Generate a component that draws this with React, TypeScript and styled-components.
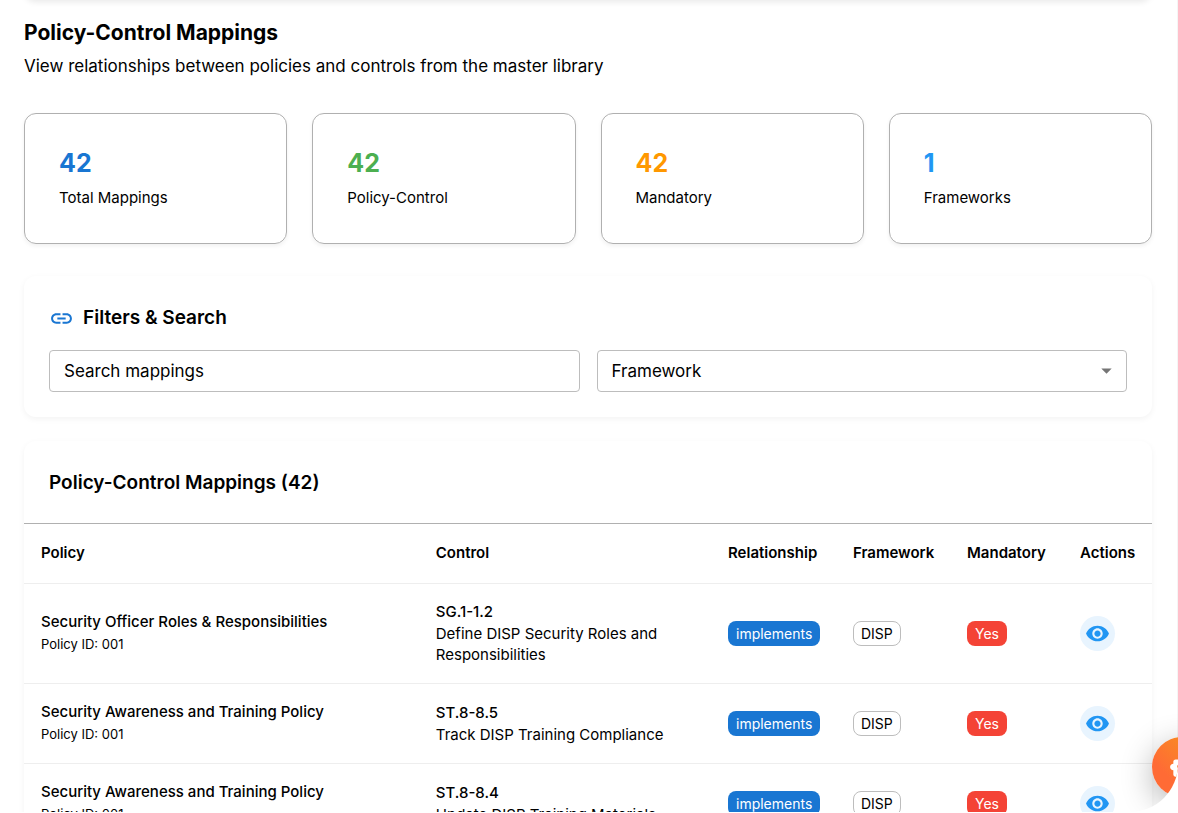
import React from "react";
import styled, { createGlobalStyle } from "styled-components";

const GlobalStyle = createGlobalStyle`
  * { box-sizing: border-box; }
  html, body { margin: 0; background: #fff; }
  body { font-family: Inter, "Liberation Sans", sans-serif; color: #000; }
  h1, h2, p { margin: 0; }
`;

const Viewport = styled.div`
  position: relative;
  height: calc(100vh - 1px);
  overflow: hidden;
  border-radius: 0 0 48px 0;
  background: #fff;
`;

const PanelAbove = styled.div`
  height: 24px;
  margin: -24px 0 0;
  border-radius: 12px;
  box-shadow: 0 2px 6px rgba(0, 0, 0, 0.09);
`;

const Page = styled.main`
  display: flex;
  flex-direction: column;
  padding: 0 25px 0 24px;
  border-right: 1px solid #f5f5f5;
`;

const Title = styled.h1`
  margin-top: 17px;
  font-size: 21px;
  line-height: 32px;
  font-weight: 700;
`;

const Subtitle = styled.p`
  margin-top: 5px;
  font-size: 17px;
  line-height: 24px;
`;

const StatGrid = styled.section`
  display: grid;
  grid-template-columns: repeat(4, 1fr);
  gap: 25px;
  margin-top: 35px;
`;

const StatCard = styled.div`
  height: 131px;
  padding: 33px 34px;
  border: 1px solid #b0b0b0;
  border-radius: 12px;
  box-shadow: 0 2px 4px rgba(0, 0, 0, 0.06);
`;

const StatValue = styled.p<{ $color: string }>`
  color: ${(p) => p.$color};
  font-size: 25px;
  line-height: 32px;
  font-weight: 700;
`;

const StatLabel = styled.p`
  margin-top: 8px;
  font-size: 15px;
  line-height: 21px;
`;

const Panel = styled.section`
  border-radius: 12px;
  box-shadow: 0 2px 6px rgba(0, 0, 0, 0.05);
`;

const FilterPanel = styled(Panel)`
  margin-top: 32px;
  padding: 26px 25px 25px;
`;

const FilterHeading = styled.h2`
  display: flex;
  align-items: center;
  gap: 9px;
  font-size: 19px;
  line-height: 32px;
  font-weight: 600;
`;

const FilterRow = styled.div`
  display: grid;
  grid-template-columns: 1fr 1fr;
  gap: 17px;
  margin-top: 16px;
`;

const SearchInput = styled.input`
  width: 100%;
  height: 42px;
  padding: 0 14px;
  border: 1px solid #bdbdbd;
  border-radius: 4px;
  background: #fff;
  font: inherit;
  font-size: 17px;
  color: #000;
  &::placeholder { color: #000; opacity: 1; }
`;

const SelectWrap = styled.div`
  position: relative;
`;

const Select = styled.select`
  width: 100%;
  height: 42px;
  padding: 0 14px;
  border: 1px solid #bdbdbd;
  border-radius: 4px;
  background: #fff;
  appearance: none;
  font: inherit;
  font-size: 17px;
  color: #000;
`;

const Arrow = styled.svg`
  position: absolute;
  right: 8px;
  top: 8px;
  pointer-events: none;
`;

const TablePanel = styled(Panel)`
  margin-top: 24px;
`;

const TableHeading = styled.h2`
  padding: 26px 25px 24px;
  font-size: 19px;
  line-height: 32px;
  font-weight: 600;
`;

const Table = styled.table`
  width: 100%;
  table-layout: fixed;
  border-collapse: separate;
  border-spacing: 0;
  border-top: 1px solid #b0b0b0;
`;

const Th = styled.th<{ $width?: string }>`
  width: ${(p) => p.$width ?? "auto"};
  height: 60px;
  padding: 0 17px 2px;
  border-bottom: 1px solid #eee;
  text-align: left;
  font-size: 15px;
  line-height: 24px;
  font-weight: 600;
`;

const Td = styled.td`
  padding: 17px;
  border-bottom: 1px solid #eee;
  vertical-align: middle;
`;

const Strong = styled.p`
  font-size: 15px;
  line-height: 22px;
  font-weight: 500;
`;

const Body = styled.p`
  padding-bottom: 1px;
  font-size: 15px;
  line-height: 21px;
`;

const Caption = styled.p`
  margin-top: 1px;
  padding-bottom: 1px;
  font-size: 13px;
  line-height: 21px;
`;

const Chip = styled.span<{ $bg?: string }>`
  display: inline-flex;
  align-items: center;
  height: 25px;
  padding: 0 ${(p) => (p.$bg ? 8 : 7)}px;
  border: ${(p) => (p.$bg ? "none" : "1px solid #bdbdbd")};
  border-radius: 8px;
  background: ${(p) => p.$bg ?? "transparent"};
  color: ${(p) => (p.$bg ? "#fff" : "#000")};
  font-size: 14px;
  line-height: 20px;
  vertical-align: middle;
`;

const ViewButton = styled.button`
  display: flex;
  align-items: center;
  justify-content: center;
  width: 35px;
  height: 35px;
  padding: 0;
  border: none;
  border-radius: 50%;
  background: #e8f4fe;
  color: #2196f3;
`;

const AssistantButton = styled.button`
  position: absolute;
  right: -34px;
  bottom: 15px;
  display: flex;
  align-items: center;
  justify-content: center;
  width: 60px;
  height: 60px;
  padding: 0;
  border: none;
  border-radius: 50%;
  background: linear-gradient(45deg, #ff6b35 30%, #f7931e 90%);
  box-shadow: 0 8px 32px rgba(0, 0, 0, 0.3);
  color: #fff;
`;

const stats = [
  { value: "42", label: "Total Mappings", color: "#1976d2" },
  { value: "42", label: "Policy-Control", color: "#4caf50" },
  { value: "42", label: "Mandatory", color: "#ff9800" },
  { value: "1", label: "Frameworks", color: "#2196f3" },
];

const rows = [
  { policy: "Security Officer Roles & Responsibilities", code: "SG.1-1.2", control: "Define DISP Security Roles and Responsibilities" },
  { policy: "Security Awareness and Training Policy", code: "ST.8-8.5", control: "Track DISP Training Compliance" },
  { policy: "Security Awareness and Training Policy", code: "ST.8-8.4", control: "Update DISP Training Materials" },
];

export default function App() {
  return (
    <>
      <GlobalStyle />
      <Viewport>
        <Page>
          <PanelAbove />
          <Title>Policy-Control Mappings</Title>
          <Subtitle>View relationships between policies and controls from the master library</Subtitle>
          <StatGrid>
            {stats.map((s) => (
              <StatCard key={s.label}>
                <StatValue $color={s.color}>{s.value}</StatValue>
                <StatLabel>{s.label}</StatLabel>
              </StatCard>
            ))}
          </StatGrid>
          <FilterPanel>
            <FilterHeading>
              <svg width="25" height="25" viewBox="0 0 24 24" fill="#1976d2" aria-hidden="true">
                <path d="M3.9 12c0-1.71 1.39-3.1 3.1-3.1h4V7H7c-2.76 0-5 2.24-5 5s2.24 5 5 5h4v-1.9H7c-1.71 0-3.1-1.39-3.1-3.1zM8 13h8v-2H8v2zm9-6h-4v1.9h4c1.71 0 3.1 1.39 3.1 3.1s-1.39 3.1-3.1 3.1h-4V17h4c2.76 0 5-2.24 5-5s-2.24-5-5-5z" />
              </svg>
              Filters &amp; Search
            </FilterHeading>
            <FilterRow>
              <SearchInput type="text" placeholder="Search mappings" aria-label="Search mappings" />
              <SelectWrap>
                <Select aria-label="Framework" defaultValue="">
                  <option value="">Framework</option>
                  <option value="DISP">DISP</option>
                </Select>
                <Arrow width="25" height="25" viewBox="0 0 24 24" fill="#757575" aria-hidden="true">
                  <path d="M7 10l5 5 5-5z" />
                </Arrow>
              </SelectWrap>
            </FilterRow>
          </FilterPanel>
          <TablePanel>
            <TableHeading>Policy-Control Mappings (42)</TableHeading>
            <Table>
              <thead>
                <tr>
                  <Th $width="35%">Policy</Th>
                  <Th>Control</Th>
                  <Th $width="125px">Relationship</Th>
                  <Th $width="114px">Framework</Th>
                  <Th $width="113px">Mandatory</Th>
                  <Th $width="89px">Actions</Th>
                </tr>
              </thead>
              <tbody>
                {rows.map((r) => (
                  <tr key={r.code}>
                    <Td>
                      <Strong>{r.policy}</Strong>
                      <Caption>Policy ID: 001</Caption>
                    </Td>
                    <Td>
                      <Strong>{r.code}</Strong>
                      <Body>{r.control}</Body>
                    </Td>
                    <Td><Chip $bg="#1976d2">implements</Chip></Td>
                    <Td><Chip>DISP</Chip></Td>
                    <Td><Chip $bg="#f44336">Yes</Chip></Td>
                    <Td>
                      <ViewButton type="button" aria-label="View mapping">
                        <svg width="25" height="25" viewBox="0 0 24 24" fill="currentColor" aria-hidden="true">
                          <path d="M12 4.5C7 4.5 2.73 7.61 1 12c1.73 4.39 6 7.5 11 7.5s9.27-3.11 11-7.5c-1.73-4.39-6-7.5-11-7.5M12 17c-2.76 0-5-2.24-5-5s2.24-5 5-5 5 2.24 5 5-2.24 5-5 5m0-8c-1.66 0-3 1.34-3 3s1.34 3 3 3 3-1.34 3-3-1.34-3-3-3" />
                        </svg>
                      </ViewButton>
                    </Td>
                  </tr>
                ))}
              </tbody>
            </Table>
          </TablePanel>
        </Page>
        <AssistantButton type="button" aria-label="Open assistant">
          <svg width="26" height="26" viewBox="0 0 24 24" fill="currentColor" aria-hidden="true">
            <path d="M20 9V7c0-1.100-.9-2-2-2h-3c0-1.660-1.340-3-3-3S9 3.340 9 5H6c-1.100 0-2 .9-2 2v2c-1.660 0-3 1.340-3 3s1.340 3 3 3v4c0 1.100.9 2 2 2h12c1.100 0 2-.9 2-2v-4c1.660 0 3-1.340 3-3s-1.340-3-3-3M7.500 11.500c0-.830.670-1.500 1.500-1.500s1.500.670 1.500 1.500S9.830 13 9 13s-1.500-.670-1.500-1.500M16 17H8v-2h8zm-1-4c-.830 0-1.500-.670-1.500-1.500S14.170 10 15 10s1.500.670 1.500 1.500S15.830 13 15 13" />
          </svg>
        </AssistantButton>
      </Viewport>
    </>
  );
}
